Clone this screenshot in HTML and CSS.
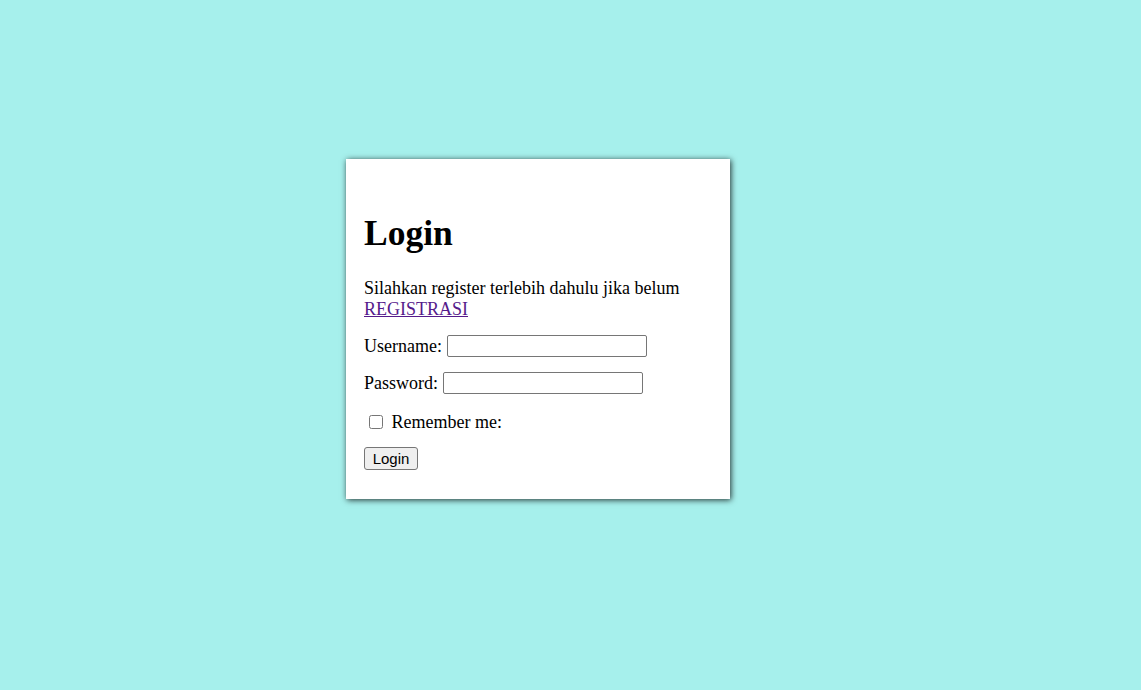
FILE: index.html
```html
<!DOCTYPE html>
<html>
<head>
<meta charset="utf-8">
<title>Login</title>
<link rel="stylesheet" href="styles.css">
</head>
<body>
<div class="card">
  <h1 class="title">Login</h1>
  <p class="intro">Silahkan register terlebih dahulu jika belum <a href="#" class="link">REGISTRASI</a></p>
  <form class="form">
    <div class="row">Username: <input type="text" class="field field-user"></div>
    <div class="row">Password: <input type="password" class="field"></div>
    <div class="row check-row"><input type="checkbox" class="check"> Remember me:</div>
    <div class="row btn-row"><button type="button" class="btn">Login</button></div>
  </form>
</div>
</body>
</html>
```
FILE: styles.css
```css
html, body {
  margin: 0;
  padding: 0;
}
body {
  background: #a6f0ec;
  font-family: "Liberation Serif", "Times New Roman", serif;
  font-size: 18px;
  color: #000;
  padding-top: 159px;
  padding-left: 346px;
  height: 690px;
  box-sizing: border-box;
}
.card {
  width: 384px;
  box-sizing: border-box;
  background: #fff;
  padding: 0 18px 29px 18px;
  display: flex;
  flex-direction: column;
  box-shadow: 1px 1px 6px rgba(0, 0, 0, 0.8);
}
.title {
  font-size: 35.5px;
  font-weight: bold;
  line-height: 40px;
  margin: 54px 0 25px 0;
}
.intro {
  margin: 0;
  line-height: 21px;
}
.link {
  color: #551a8b;
}
.form {
  display: flex;
  flex-direction: column;
  margin-top: 15px;
}
.row {
  line-height: 22px;
  height: 22px;
  display: flex;
  align-items: center;
  white-space: pre;
  margin-bottom: 15px;
}
.field {
  width: 200px;
  height: 22px;
  box-sizing: border-box;
  border: 1px solid #767676;
  border-radius: 2px;
  padding: 1px 2px;
  margin: 0;
  font-size: 14px;
}
.field-user {
  margin-left: 1px;
}
.check-row {
  margin-top: 2px;
  margin-bottom: 14px;
}
.check {
  width: 14px;
  height: 14px;
  margin: 0 4px 0 5px;
}
.btn-row {
  height: 23px;
  margin-bottom: 0;
}
.btn {
  font-family: "Liberation Sans", Arial, sans-serif;
  font-size: 15px;
  height: 23px;
  width: 54px;
  padding: 0;
  line-height: 20px;
  background: #efefef;
  border: 1px solid #767676;
  border-radius: 3px;
  color: #000;
}
```
